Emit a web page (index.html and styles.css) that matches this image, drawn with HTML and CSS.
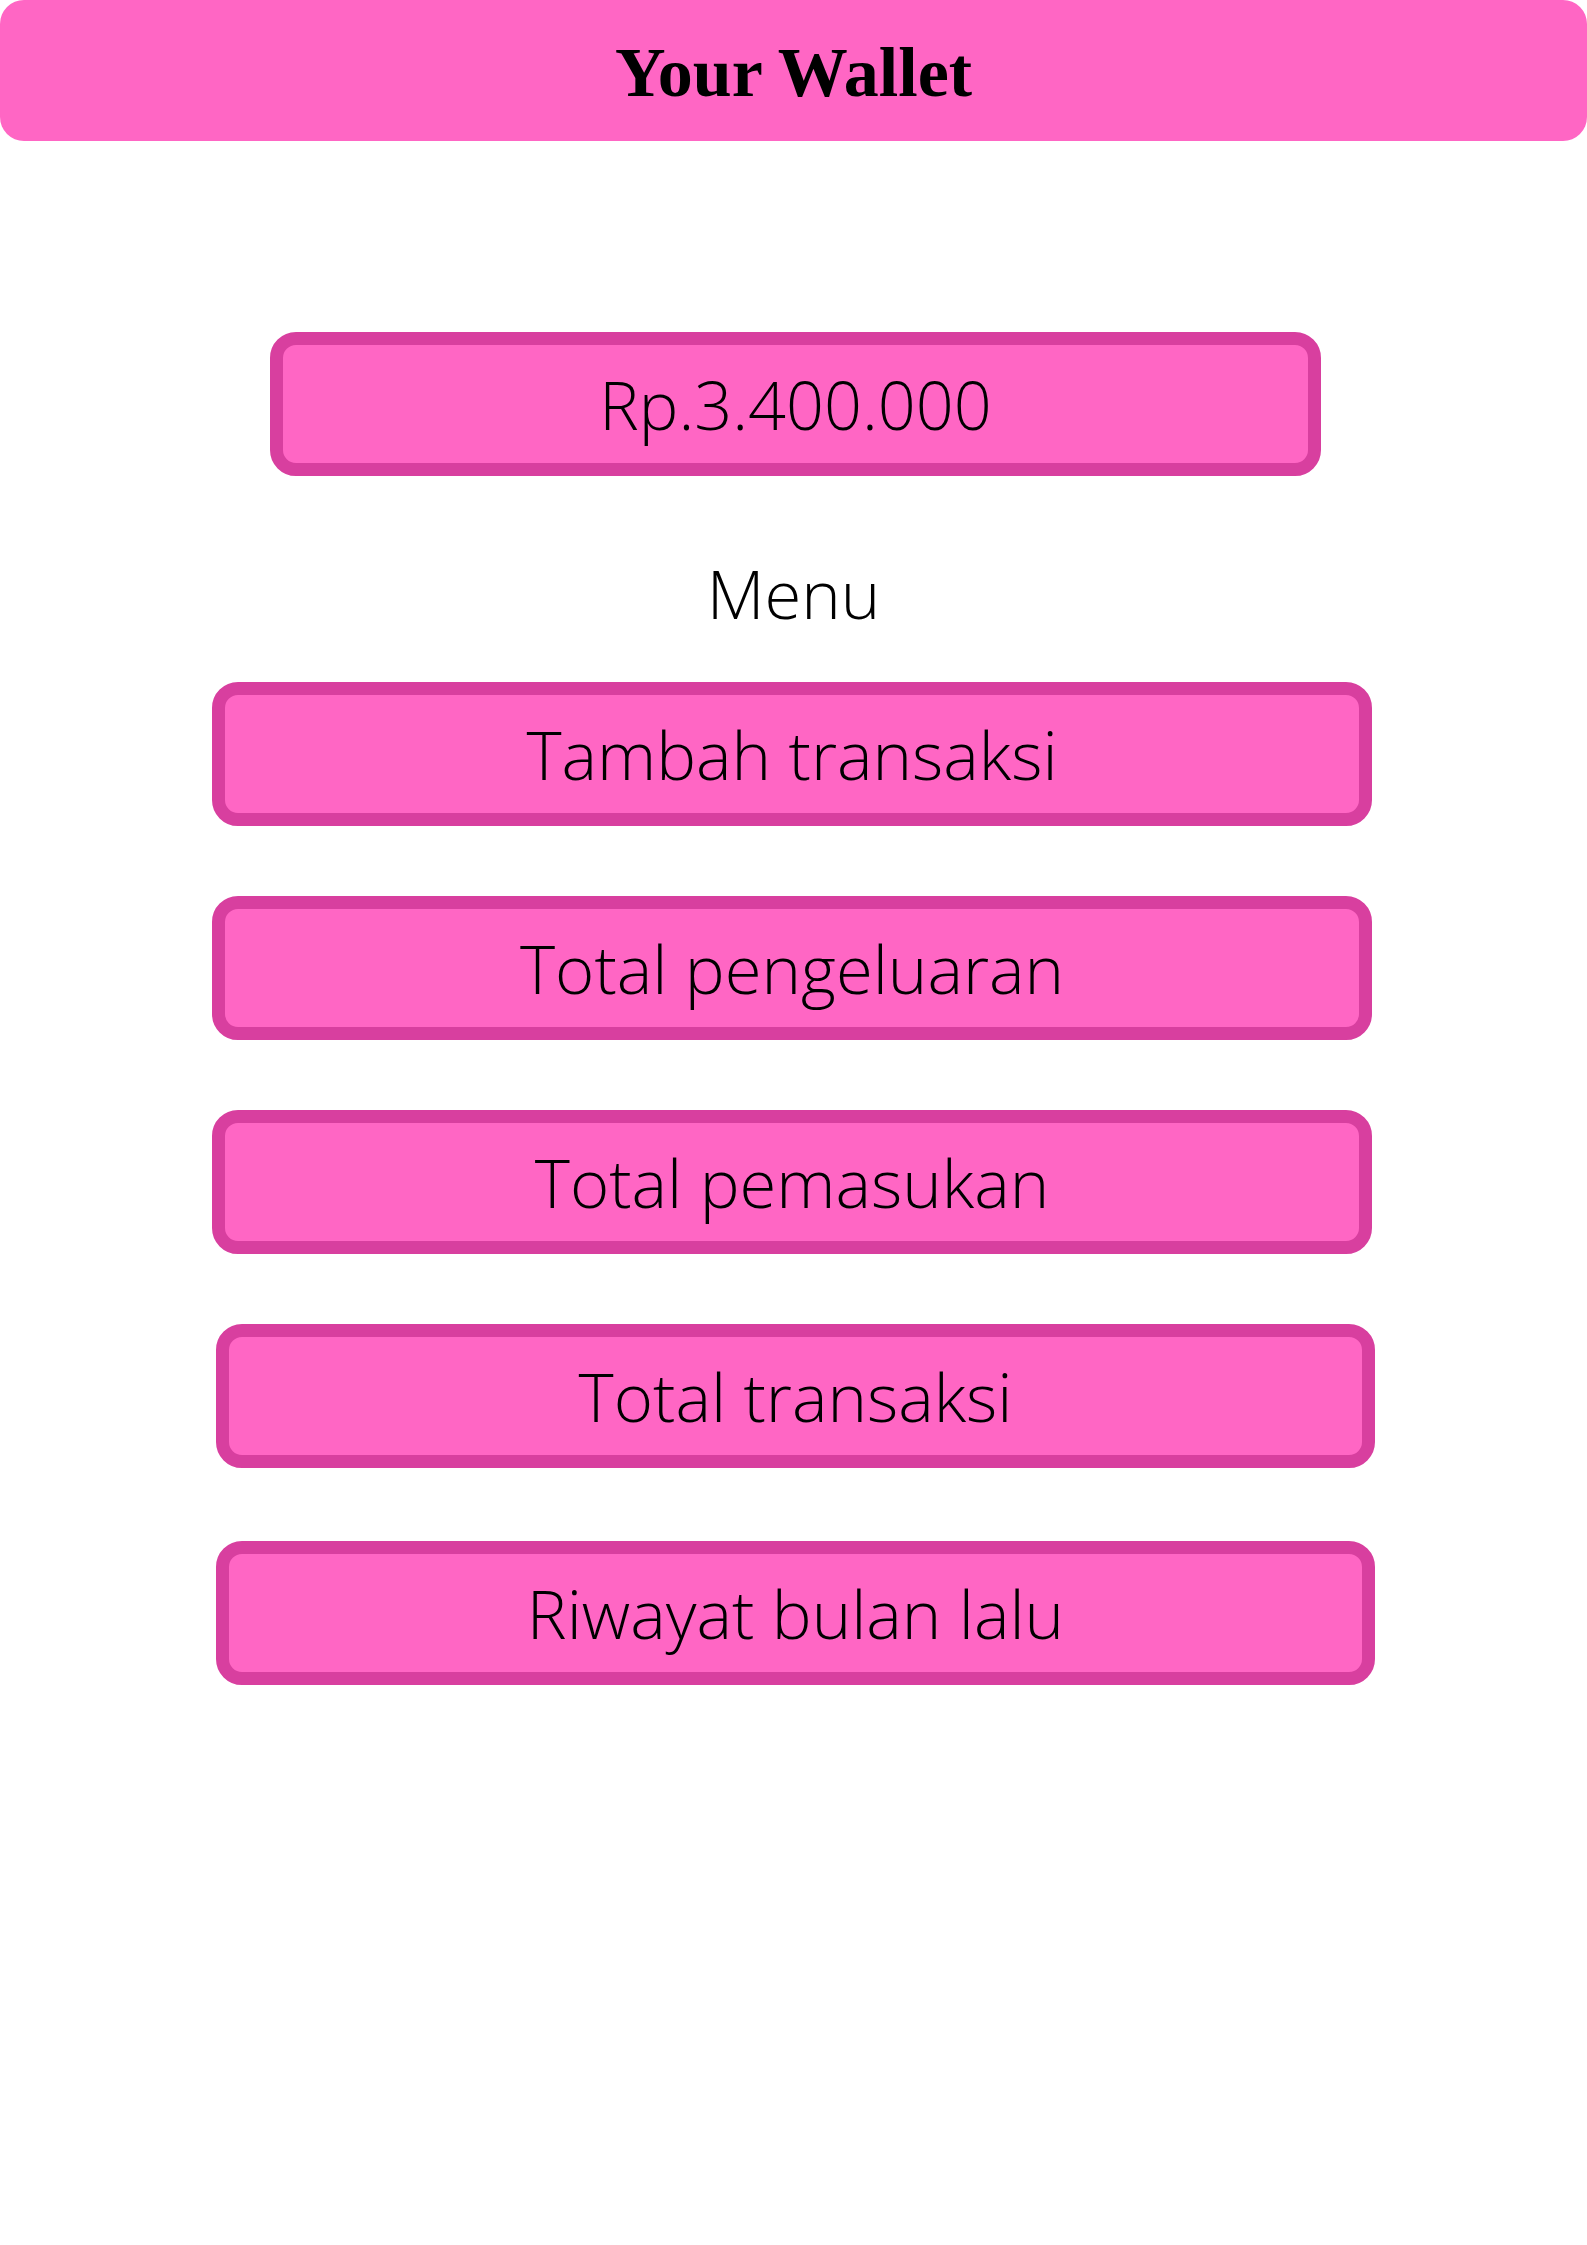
FILE: index.html
```html
<!DOCTYPE html>
<html lang="id">
<head>
<meta charset="utf-8">
<title>Your Wallet</title>
<link rel="stylesheet" href="styles.css">
</head>
<body>
  <header class="topbar">
    <h1 class="title">Your Wallet</h1>
  </header>
  <main class="content">
    <div class="balance">Rp.3.400.000</div>
    <div class="menu-label">Menu</div>
    <nav class="menu">
      <div class="btn">Tambah transaksi</div>
      <div class="btn">Total pengeluaran</div>
      <div class="btn">Total pemasukan</div>
      <div class="btn btn-alt">Total transaksi</div>
      <div class="btn btn-alt btn-last">Riwayat bulan lalu</div>
    </nav>
  </main>
</body>
</html>
```
FILE: styles.css
```css
* { box-sizing: border-box; }

html, body {
  margin: 0;
  padding: 0;
  background: #ffffff;
}

body {
  width: 1587px;
  min-height: 2245px;
  font-family: "Open Sans", "Noto Sans", sans-serif;
  color: #000000;
}

.topbar {
  height: 141px;
  background: #ff66c4;
  border-radius: 24px;
  display: flex;
  align-items: center;
  justify-content: center;
  padding-top: 5px;
}

.title {
  margin: 0;
  font-family: "Liberation Serif", "Times New Roman", serif;
  font-weight: 700;
  font-size: 70px;
  line-height: 1;
  color: #000000;
}

.content {
  display: flex;
  flex-direction: column;
}

.balance {
  margin-top: 191px;
  margin-left: 270px;
  width: 1051px;
  height: 144px;
  background: #ff66c4;
  border: 13px solid #d83f9f;
  border-radius: 26px;
  display: flex;
  align-items: center;
  justify-content: center;
  font-weight: 300;
  font-size: 66.5px;
}

.menu-label {
  margin-top: 67px;
  height: 100px;
  line-height: 100px;
  text-align: center;
  font-weight: 300;
  font-size: 67px;
}

.menu {
  margin-top: 39px;
  display: flex;
  flex-direction: column;
  gap: 70px;
}

.btn {
  margin-left: 212px;
  width: 1160px;
  height: 144px;
  background: #ff66c4;
  border: 13px solid #d83f9f;
  border-radius: 26px;
  display: flex;
  align-items: center;
  justify-content: center;
  font-weight: 300;
  font-size: 67px;
}

.btn-alt {
  margin-left: 216px;
  width: 1159px;
}

.btn-last {
  margin-top: 3px;
}
```
